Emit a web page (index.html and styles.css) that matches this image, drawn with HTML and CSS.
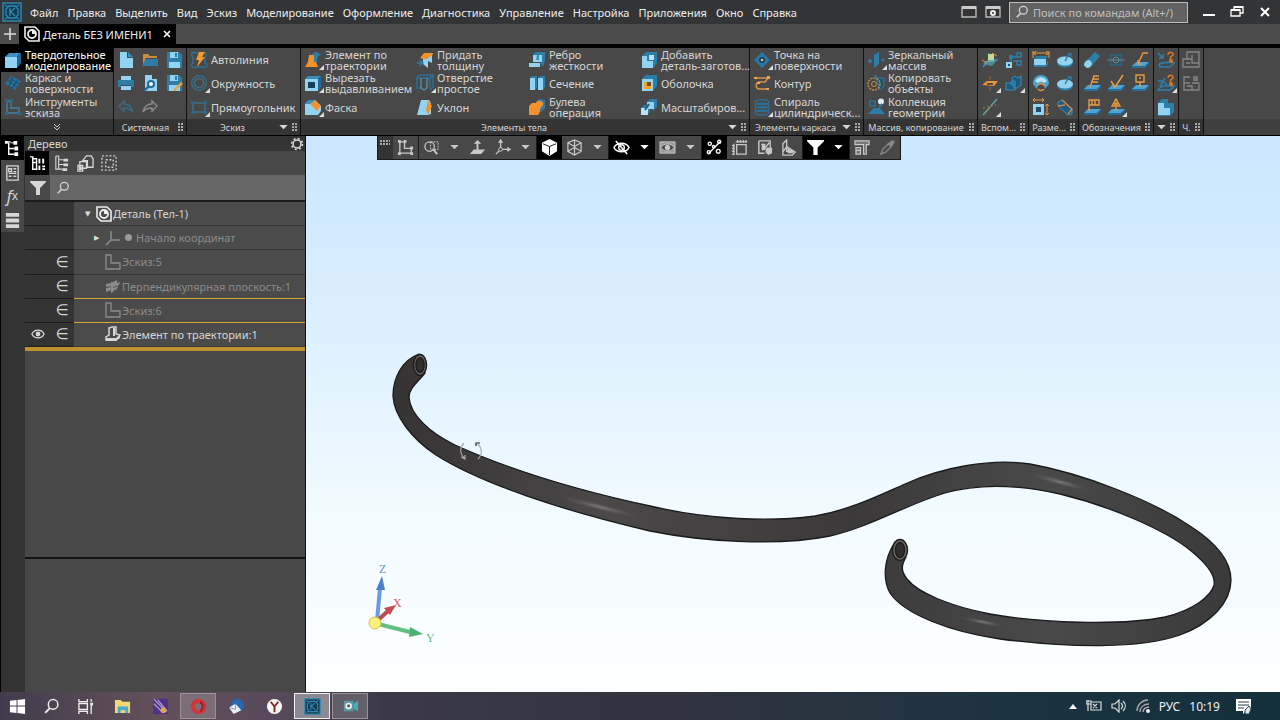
FILE: index.html
```
<!DOCTYPE html>
<html lang="ru">
<head>
    <meta charset="UTF-8">
    <meta name="viewport" content="width=device-width, initial-scale=1">
    <title>Деталь БЕЗ ИМЕНИ1</title>
    <link rel="stylesheet" href="styles.css">
</head>
<body>

<!-- Набор иконок -->
<svg class="sprite" aria-hidden="true">
    <defs>
        <symbol id="logo" viewBox="0 0 20 20"><rect x="1" y="1" width="18" height="18" fill="#123c52" stroke="#3488b3" stroke-width="1.4"/><path d="M7 4h6l3 3v6l-3 3H7l-3-3V7zM8 6v8M8 10l5-4M8 9l5 5M3 3l3 2M17 3l-3 2M3 17l3-2M17 17l-3-2" fill="none" stroke="#3488b3" stroke-width="1.3"/></symbol>
        <symbol id="part" viewBox="0 0 16 16"><path d="M1 1h10l4 4v10H5l-4-4z" fill="none" stroke="#eee" stroke-width="1.6"/><circle cx="8" cy="8" r="4" fill="none" stroke="#eee" stroke-width="1.8"/><path d="M8 8V4.500a3.500 3.500 0 0 1 3.500 3.500z" fill="#eee"/></symbol>
        <symbol id="search" viewBox="0 0 16 16"><circle cx="9.500" cy="6" r="4.500" fill="none" stroke="currentColor" stroke-width="1.4"/><path d="M6.500 9.500L2 14" stroke="currentColor" stroke-width="1.8"/></symbol>
        <symbol id="funnel" viewBox="0 0 16 16"><path d="M0 1h16v1l-6 6v7H6V8L0 2z" fill="currentColor"/></symbol>
        <symbol id="caret" viewBox="0 0 10 6"><path d="M0 0h10L5 5z" fill="currentColor"/></symbol>
        <symbol id="grip" viewBox="0 0 5 8"><path d="M0 0h2v2H0zM3 0h2v2H3zM0 3h2v2H0zM3 3h2v2H3zM0 6h2v2H0zM3 6h2v2H3z" fill="currentColor"/></symbol>

        <symbol id="cube" viewBox="0 0 18 18"><path d="M1 6l4-4h12l-4 4z" fill="#3b8fc0"/><path d="M1 6h12v11H1z" fill="#93d3f2"/><path d="M13 6l4-4v10l-4 5z" fill="#1f6a99"/></symbol>
        <symbol id="frame" viewBox="0 0 18 18"><path d="M1 10l6-8 4 2 6 3-6 9-4-3z" fill="#2a6f9b"/><path d="M4 6l9 7M9 3l-4 9M14 6l-6 8M6 4l9 6" stroke="#18486a"/></symbol>
        <symbol id="sketch" viewBox="0 0 18 18"><path d="M3 3h4v7h8v5H3z" fill="none" stroke="#43809f" stroke-width="1.4"/><path d="M1 1h3v3H1zM6 1h3v3H6zM1 14h3v3H1zM14 14h3v3h-3z" fill="#2c6788"/></symbol>
        <symbol id="new" viewBox="0 0 18 18"><path d="M3 1h7v6h6v10H3z" fill="#93d3f2"/><path d="M11 1l5 5h-5z" fill="#3b8fc0"/></symbol>
        <symbol id="open" viewBox="0 0 18 18"><path d="M2 3h5l2 2h7v2H5l-3 7z" fill="#c98a44"/><path d="M5 8h12v7H1z" fill="#2e7da9"/></symbol>
        <symbol id="save" viewBox="0 0 18 18"><path d="M2 1h12l3 3v13H2z" fill="#2e7da9"/><path d="M5 1h8v6H5zM4 11h11v6H4z" fill="#93d3f2"/><path d="M10 2h2v4h-2z" fill="#2e7da9"/></symbol>
        <symbol id="print" viewBox="0 0 18 18"><path d="M4 2h10v4H4zM4 12h10v4H4z" fill="#93d3f2"/><path d="M1 6h16v7h-3v-2H4v2H1z" fill="#2e7da9"/></symbol>
        <symbol id="preview" viewBox="0 0 18 18"><path d="M4 1h7v4h5v12H4z" fill="#93d3f2"/><circle cx="10" cy="10" r="3" fill="#fff" stroke="#1f6a99" stroke-width="2"/><path d="M7.500 12.500L3 17" stroke="#1f6a99" stroke-width="2.400"/></symbol>
        <symbol id="saveas" viewBox="0 0 18 18"><use href="#save"/><path d="M8 16l8-8 2 2-8 7z" fill="#f0a040"/></symbol>
        <symbol id="undo" viewBox="0 0 18 18"><path d="M7 3L2 8l5 5v-3c4 0 7 1 9 4-1-5-4-8-9-8z" fill="none" stroke="#3c6a83" stroke-width="1.400"/></symbol>
        <symbol id="redo" viewBox="0 0 18 18"><path d="M11 3l5 5-5 5v-3c-4 0-7 1-9 4 1-5 4-8 9-8z" fill="none" stroke="#8a8a8a" stroke-width="1.400"/></symbol>

        <symbol id="autoline" viewBox="0 0 18 18"><path d="M6 2C2 0 0 4 3 6v6c-4 2 0 6 3 4h7c4 2 5-3 2-4V6c3-3 0-6-3-4z" fill="none" stroke="#2e7094" stroke-width="1.500"/><path d="M9 1h6l-3 5h3l-8 10 2-7H6z" fill="#f39a2d"/></symbol>
        <symbol id="circle" viewBox="0 0 18 18"><circle cx="9" cy="9" r="7.200" fill="none" stroke="#2f6f92" stroke-width="1.500"/><circle cx="9" cy="9" r="4.500" fill="none" stroke="#4c6c7d" stroke-width="1.500"/></symbol>
        <symbol id="rect" viewBox="0 0 18 18"><path d="M3 5h12v9H3z" fill="none" stroke="#3a6f8c" stroke-width="1.500"/><path d="M1 3h3v3H1zM14 3h3v3h-3zM1 13h3v3H1zM14 13h3v3h-3z" fill="#2c6788"/></symbol>

        <symbol id="sweep" viewBox="0 0 18 18"><path d="M7 8c0-5 3-7 6-7l4 3c-3 0-4 2-4 7l-4 5z" fill="#2e7da9"/><path d="M5 4h5v7h2l2 5H1l3-5z" fill="#f3912a"/></symbol>
        <symbol id="cut" viewBox="0 0 18 18"><path d="M1 5l3-3h13l-3 3z" fill="#3b8fc0"/><path d="M14 5l3-3v11l-3 4z" fill="#1f6a99"/><path d="M1 5h13v12H1z" fill="#93d3f2"/><path d="M4 8h7v6H4z" fill="#183f59"/></symbol>
        <symbol id="chamfer" viewBox="0 0 18 18"><path d="M1 6l4-4h6l6 6v5l-3 4H1z" fill="#93d3f2"/><path d="M6 6l5-4 6 6-4 5z" fill="#f3912a"/><path d="M1 6l4-4h6L6 6z" fill="#3b8fc0"/></symbol>
        <symbol id="thick" viewBox="0 0 18 18"><path d="M4 7l4-5h9l-2 6H7z" fill="#f3912a"/><path d="M7 8h4l5-4v8l-4-2v7l-5-4z" fill="#93d3f2"/><path d="M1 12h5M3 9l4 3-4 3" fill="none" stroke="#2e7da9" stroke-width="1.400"/></symbol>
        <symbol id="hole" viewBox="0 0 18 18"><path d="M1 3l3-2h13l-3 3v9M1 3v11h4M17 2v11l-3 3M1 4h13" fill="none" stroke="#2e6f96" stroke-width="1.400"/><path d="M5 4v10l3 2 3-2V4" fill="none" stroke="#4f91b4" stroke-width="1.400"/></symbol>
        <symbol id="draft" viewBox="0 0 18 18"><path d="M5 2h8l2 3v11l-3 1H1z" fill="#93d3f2"/><path d="M12 2l4 6-4 9-2-5z" fill="#f3912a"/></symbol>
        <symbol id="rib" viewBox="0 0 18 18"><path d="M5 3l3-2h9v9l-2 6-3-5z" fill="#2e7da9"/><path d="M5 4h9v7H5zM1 12h11v4H1z" fill="#93d3f2"/><path d="M9 4h2v5H8z" fill="#3b8fc0"/></symbol>
        <symbol id="section" viewBox="0 0 18 18"><path d="M2 4l2-2h5v12l-2 2zM10 4l2-2h5v11l-2 3z" fill="#2e7da9"/><path d="M2 4h5v12H2zM10 4h5v12h-5z" fill="#93d3f2"/></symbol>
        <symbol id="boolean" viewBox="0 0 18 18"><path d="M8 4l3-3 6 1v8l-4 4z" fill="#2e7da9"/><path d="M1 8l3-3h4c2-4 8-2 7 2l-3 4v3l-2 3H1z" fill="#f3912a"/></symbol>
        <symbol id="addpart" viewBox="0 0 18 18"><path d="M2 5l4-4h11v11l-4 5z" fill="#2e7da9"/><path d="M2 5h5v5h6v7H2z" fill="#93d3f2"/><path d="M9 4h5v5H9z" fill="#b7e4f8"/></symbol>
        <symbol id="shell" viewBox="0 0 18 18"><path d="M2 5l4-4h11v11l-4 5z" fill="#2e7da9"/><path d="M2 5h11v12H2z" fill="#93d3f2"/><path d="M4 8h7v7H4z" fill="#f3a02d"/><path d="M7 8h4v4H7z" fill="#754916"/></symbol>
        <symbol id="scale" viewBox="0 0 18 18"><path d="M7 4l3-3h7v8l-4 4M1 10l3-3h6v7l-3 3" fill="#2e7da9"/><path d="M7 4h7v7H7z" fill="#93d3f2"/><path d="M1 10h7v7H1z" fill="#b7e4f8"/><path d="M9 6l-4 6" stroke="#235c80" stroke-width="2"/></symbol>

        <symbol id="point" viewBox="0 0 18 18"><path d="M1 9l8-8 8 8-8 8z" fill="#2778a8"/><circle cx="9" cy="9" r="3" fill="#173e57"/><circle cx="9" cy="9" r="1.300" fill="#e8c58b"/></symbol>
        <symbol id="contour" viewBox="0 0 18 18"><path d="M3 4h12l-3 4H7c-5 0-5 7 0 7h7" fill="none" stroke="#d79146" stroke-width="1.600"/><path d="M1 3h3v2H1zM14 2h3v3h-3zM4 8h3v2H4zM13 14h3v2h-3z" fill="#e7a65a"/></symbol>
        <symbol id="spiral" viewBox="0 0 18 18"><g fill="none" stroke="#2b7099" stroke-width="1.400"><ellipse cx="9" cy="4" rx="7" ry="2.400"/><ellipse cx="9" cy="7.500" rx="7" ry="2.400"/><ellipse cx="9" cy="11" rx="7" ry="2.400"/><ellipse cx="9" cy="14.500" rx="7" ry="2.400"/></g></symbol>
        <symbol id="mirror" viewBox="0 0 18 18"><path d="M7 4l5-3v12l-5 4z" fill="#2e7da9"/><circle cx="3" cy="10" r="2" fill="#2e7da9"/><circle cx="16" cy="9" r="1.500" fill="#2e7da9"/></symbol>
        <symbol id="copyobj" viewBox="0 0 18 18"><path d="M8 1l4 3h5v8l-4 4z" fill="#23516b" stroke="#2e7da9"/><circle cx="7" cy="10" r="6" fill="none" stroke="#c98c48" stroke-width="1.400" stroke-dasharray="2 1"/><circle cx="7" cy="10" r="2.500" fill="none" stroke="#c98c48"/></symbol>
        <symbol id="collect" viewBox="0 0 18 18"><path d="M1 16l6-6h6l5 6z" fill="#2e7da9"/><path d="M3 3h5v5H3z" fill="none" stroke="#2e6f96" stroke-width="1.500"/><circle cx="14" cy="3.500" r="3" fill="#dcecf3"/><path d="M12 9l3-3" stroke="#2e7da9" stroke-width="2"/></symbol>

        <symbol id="csys" viewBox="0 0 18 18"><path d="M2 16l6-7V2M8 9h9" fill="none" stroke="#3b8fc0" stroke-width="1.500"/><path d="M7 3h6v8H7z" fill="#c0d99c"/><path d="M2 13l4-4h10l-5 6z" fill="#4f9cb1" opacity=".8"/><path d="M1 9l5 3M11 2l5 3" stroke="#e79a43"/></symbol>
        <symbol id="plane" viewBox="0 0 18 18"><path d="M1 11l5-4h11l-4 5z" fill="#e7953a"/><path d="M6 10h6" stroke="#5a4a3a" stroke-width="2"/><path d="M9 2v4M9 13v4" stroke="#9b6a3a"/></symbol>
        <symbol id="axis" viewBox="0 0 18 18"><path d="M2 17L16 1" stroke="#5ca4a1" stroke-width="1.500"/><path d="M2 10l7-2 6-1M4 14l9-9" stroke="#b0844f" stroke-dasharray="2 2"/></symbol>
        <symbol id="links" viewBox="0 0 18 18"><path d="M6 6h6M6 6v7M8 10h5M12 2h4v4h-4zM12 10h4v4h-4z" fill="none" stroke="#2e7da9" stroke-width="1.500"/><path d="M4 4h4v4H4z" fill="#2e7da9"/><path d="M1 11h6v6H1z" fill="#93d3f2"/><path d="M3 13h2v2H3z" fill="#23516b"/></symbol>
        <symbol id="parts" viewBox="0 0 18 18"><path d="M7 4l3-2 3 2 3-2v9l-4 3H9zM1 9h9v7H1z" fill="#1f5878" stroke="#3b8fc0"/><circle cx="8" cy="9" r="3" fill="#2e7da9"/></symbol>
        <symbol id="dimlin" viewBox="0 0 18 18"><path d="M2 8h12v6H2z" fill="#93d3f2"/><path d="M2 14h12l2-6v6l-2 2H2zM2 8l2-3h12l-2 3z" fill="#2e7da9"/><path d="M2 2h14M4 0L1 2l3 2M14 0l3 2-3 2M1 0v7M17 0v7" fill="none" stroke="#e79a43"/></symbol>
        <symbol id="dimrad" viewBox="0 0 18 18"><path d="M1 10c0-12 16-12 16 0l-4 5C12 7 6 7 5 15z" fill="#4aa4d4"/><path d="M3 7c4-5 8-5 12 0l-3 2c-2-2-4-2-6 0z" fill="#b7e4f8"/><path d="M5 12c2-3 6-3 8 0M6 15c2 2 4 2 6 0" fill="none" stroke="#e79a43" stroke-width="1.300"/></symbol>
        <symbol id="dimsq" viewBox="0 0 18 18"><path d="M1 6h11v11H1z" fill="#93d3f2"/><path d="M4 9h5v5H4z" fill="#204c65"/><path d="M1 2h11M3 0L1 2l2 2M10 0l2 2-2 2M15 6v11M13 8l2-2 2 2M13 15l2 2 2-2" fill="none" stroke="#e79a43"/></symbol>
        <symbol id="disc" viewBox="0 0 18 18"><ellipse cx="9" cy="12" rx="8" ry="4.500" fill="#2e7da9"/><ellipse cx="9" cy="10" rx="8" ry="4.500" fill="#93d3f2"/><path d="M9 10l4-7M12 3h3v3" fill="none" stroke="#2e7da9" stroke-width="1.500"/></symbol>
        <symbol id="slant" viewBox="0 0 18 18"><path d="M2 4l4-2 10 9v5l-4 1L2 8z" fill="#205a7c" stroke="#3b8fc0"/><path d="M6 2l10 9-4 5M2 8l7-1" fill="none" stroke="#c98c48" stroke-width="1.400"/></symbol>
        <symbol id="cyl" viewBox="0 0 18 18"><path d="M2 11L12 1l5 4-9 11z" fill="#2e7da9"/><ellipse cx="5" cy="13" rx="3.500" ry="4" fill="#93d3f2" transform="rotate(45 5 13)"/></symbol>
        <symbol id="ctr" viewBox="0 0 18 18"><path d="M4 4h10v10H4z" fill="none" stroke="#2b6587" stroke-width="1.500"/><path d="M0 9h18" stroke="#74888f"/><circle cx="9" cy="9" r="3" fill="none" stroke="#4f91b4"/></symbol>
        <symbol id="slab" viewBox="0 0 18 18"><path d="M1 15l4-4h13l-4 4z" fill="#4aa4d4"/><path d="M1 15h13l4-4v2l-4 4H1z" fill="#256e98"/></symbol>
        <symbol id="lead" viewBox="0 0 18 18"><use href="#slab"/><path d="M7 13l5-11h5M7 9v4h3" fill="none" stroke="#e79a43" stroke-width="1.400"/></symbol>
        <symbol id="mark" viewBox="0 0 18 18"><use href="#slab"/><path d="M7 13l4-11h5M10 5h6M9 8h6" fill="none" stroke="#e79a43" stroke-width="1.400"/></symbol>
        <symbol id="rough" viewBox="0 0 18 18"><use href="#slab"/><path d="M4 7l4 6 8-12" fill="none" stroke="#e79a43" stroke-width="1.600"/></symbol>
        <symbol id="base" viewBox="0 0 18 18"><use href="#slab"/><path d="M5 1h8v7H5zM9 8v5M8 4h2" fill="none" stroke="#e79a43" stroke-width="1.400"/></symbol>
        <symbol id="tol" viewBox="0 0 18 18"><use href="#slab"/><path d="M6 13V2h10v5H6M9 2v5M12 2v5" fill="none" stroke="#e79a43" stroke-width="1.400"/></symbol>
        <symbol id="weld" viewBox="0 0 18 18"><use href="#slab"/><path d="M9 13V9M5 8l4-7 4 7zM9 4v4M7 6h4" fill="none" stroke="#e79a43" stroke-width="1.400"/></symbol>
        <symbol id="ask" viewBox="0 0 18 18"><path d="M1 2l5 5M6 3v4H2M2 14c3-5 9 0 12-4l3 2-4 4H3z" fill="none" stroke="#2e7da9" stroke-width="1.600"/><path d="M11 4c0-4 6-3 5 0l-2.500 2v2M13 9h2v2h-2z" fill="none" stroke="#e07c25" stroke-width="1.500"/></symbol>
        <symbol id="ask2" viewBox="0 0 18 18"><path d="M1 7h5l4 4M8 4l-5 8M1 16l4-4h12l-4 4z" fill="none" stroke="#2e7da9" stroke-width="1.600"/><path d="M11 4c0-4 6-3 5 0l-2.500 2v2M13 9h2v2h-2z" fill="none" stroke="#e07c25" stroke-width="1.500"/></symbol>
        <symbol id="body" viewBox="0 0 18 18"><path d="M1 5l4-4h6v4h6v9l-4 4H1z" fill="#2e7da9"/><path d="M1 5h6v5h6v7H1z" fill="#93d3f2"/></symbol>
        <symbol id="sheet" viewBox="0 0 18 18"><path d="M5 1h12v15H1V8h4zM5 8h5V4M10 8v4h7M4 12h4" fill="none" stroke="#858585" stroke-width="1.300"/></symbol>
        <symbol id="sheet2" viewBox="0 0 18 18"><path d="M8 3H2v6h6M2 9v7h15V9M5 12h5v4M10 9h7" fill="none" stroke="#858585" stroke-width="1.300"/><path d="M11 2h5v5h-5z" fill="#777"/></symbol>

        <symbol id="tree" viewBox="0 0 18 18"><path d="M5 3v12h6M5 9h6M2 2h5" fill="none" stroke="currentColor" stroke-width="1.500"/><path d="M1 1h3v3H1zM10 1h4v4h-4zM11 7h4v4h-4zM11 13h4v4h-4z" fill="currentColor"/><path d="M7 3h4" stroke="currentColor"/></symbol>
        <symbol id="tree2" viewBox="0 0 18 18"><path d="M1 2h3v13h5M4 4h4v11M4 8h4" fill="none" stroke="currentColor" stroke-width="1.500"/><path d="M10 4h2v5h-2zM14 4h2v5h-2zM10 11h2v5h-2zM14 11h3v2h-3zM14 14h3v2h-3z" fill="currentColor"/></symbol>
        <symbol id="tree3" viewBox="0 0 18 18"><path d="M3 1h3v14h4M3 1v14h3M6 5h5M6 10h5" fill="none" stroke="currentColor" stroke-width="1.200"/><path d="M11 4h5v3h-5zM11 9h5v3h-5zM10 14h5v3h-5z" fill="currentColor"/></symbol>
        <symbol id="docs" viewBox="0 0 18 18"><path d="M6 6l4-5h5l2 3v9h-6V6zM3 7h7v7H3zM1 11h5v6H1z" fill="none" stroke="currentColor" stroke-width="1.400"/><path d="M2 12h3v4H2z" fill="currentColor"/></symbol>
        <symbol id="select" viewBox="0 0 18 18"><path d="M1 1h15v15H1zM5 5h8v8H5z" fill="none" stroke="currentColor" stroke-width="1.400" stroke-dasharray="2 2"/></symbol>
        <symbol id="props" viewBox="0 0 18 18"><path d="M3 2h12v15H3zM5 5h3v3H5zM5 13h3M10 5h3M10 8h3M5 10h8M10 13h3" fill="none" stroke="currentColor" stroke-width="1.400"/></symbol>
        <symbol id="bars" viewBox="0 0 18 18"><path d="M2 1h14v4H2zM2 7h14v4H2zM2 13h14v4H2z" fill="currentColor"/></symbol>
        <symbol id="gear" viewBox="0 0 16 16"><circle cx="8" cy="8" r="4.500" fill="none" stroke="currentColor" stroke-width="1.800"/><circle cx="8" cy="8" r="6.200" fill="none" stroke="currentColor" stroke-width="1.800" stroke-dasharray="2.400 2.470"/></symbol>
        <symbol id="eye" viewBox="0 0 16 16"><path d="M1 8c3-6 11-6 14 0-3 6-11 6-14 0z" fill="none" stroke="currentColor" stroke-width="1.500"/><circle cx="8" cy="8" r="2.800" fill="currentColor"/></symbol>
        <symbol id="origin" viewBox="0 0 16 16"><path d="M6 1v9h9M6 10l-5 5" fill="none" stroke="currentColor" stroke-width="1.500"/></symbol>
        <symbol id="ell" viewBox="0 0 16 16"><path d="M1 1h5v8h9v6H1z" fill="none" stroke="currentColor" stroke-width="1.300"/></symbol>
        <symbol id="perp" viewBox="0 0 16 16"><path d="M1 6l5-1v3l-5 1zM1 10l5-1v3l-5 2zM6 4h2v10l-2 1zM8 4l4-2v3l3-1-1 3-6 2zM8 10l5-2-1 3-4 2z" fill="currentColor"/></symbol>
        <symbol id="sweepw" viewBox="0 0 16 16"><path d="M4 2l3-1h4v7l4 1-4 5H1v-3l3-2z" fill="none" stroke="currentColor" stroke-width="1.500"/><path d="M8 2h2v8H8zM11 12l4-3v3l-4 3zM1 12h10v3H1z" fill="currentColor"/></symbol>

        <symbol id="v-sk" viewBox="0 0 18 18"><path d="M3 3h5v7h7v5H3z" fill="none" stroke="currentColor" stroke-width="1.400"/><path d="M1 1h3v3H1zM7 1h3v3H7zM1 14h3v3H1zM14 14h3v3h-3zM14 8h3v3h-3z" fill="currentColor"/></symbol>
        <symbol id="v-zoom" viewBox="0 0 18 18"><circle cx="7" cy="8" r="5" fill="none" stroke="currentColor" stroke-width="1.300"/><path d="M8 3h8v8H8z" fill="none" stroke="currentColor" stroke-dasharray="2 1"/><path d="M11 11l4 5" stroke="currentColor" stroke-width="2"/></symbol>
        <symbol id="v-norm" viewBox="0 0 18 18"><path d="M1 16l4-5h12l-4 5z" fill="currentColor"/><path d="M8 13V5H5l4-4 4 4h-3v8z" fill="currentColor"/></symbol>
        <symbol id="v-axes" viewBox="0 0 18 18"><path d="M7 2v9h10M7 11l-5 5M14 9l3 2-3 2M5 4l2-3 2 3" fill="none" stroke="currentColor" stroke-width="1.400"/><circle cx="7" cy="11" r="2" fill="#484848" stroke="currentColor"/></symbol>
        <symbol id="v-cube" viewBox="0 0 18 18"><path d="M9 0l8 4v9l-8 5-8-5V4z" fill="#fff"/><path d="M2 5l7 3 7-3M9 8v9" fill="none" stroke="#111" stroke-width="1"/></symbol>
        <symbol id="v-wire" viewBox="0 0 18 18"><path d="M9 1l7 3v9l-7 4-7-4V4zM2 4l7 4 7-4M9 8v9M9 1v8l-7 4M9 9l7 4" fill="none" stroke="currentColor" stroke-width="1.300"/></symbol>
        <symbol id="v-hide" viewBox="0 0 18 18"><path d="M1 9c3-6 13-6 16 0-3 6-13 6-16 0zM3 2l12 14" fill="none" stroke="currentColor" stroke-width="1.600"/><circle cx="9" cy="9" r="3" fill="none" stroke="currentColor" stroke-width="1.500"/></symbol>
        <symbol id="v-view" viewBox="0 0 18 18"><path d="M1 3h16v12H1z" fill="#9a9a9a" stroke="currentColor"/><path d="M2 9c3-5 11-5 14 0-3 5-11 5-14 0z" fill="#484848" stroke="currentColor"/><circle cx="9" cy="9" r="2.800" fill="currentColor"/></symbol>
        <symbol id="v-snap" viewBox="0 0 18 18"><path d="M3 15L15 3" stroke="currentColor" stroke-width="1.500"/><g fill="none" stroke="currentColor" stroke-width="1.400"><circle cx="4" cy="5" r="1.700"/><circle cx="8" cy="8" r="1.200"/><circle cx="14" cy="3" r="1.700"/><circle cx="3" cy="14" r="1.700"/><circle cx="13" cy="13" r="2"/></g></symbol>
        <symbol id="v-a" viewBox="0 0 18 18"><path d="M6 6h10v10H6zM5 3h12M7 1v3M10 1v3M13 1v3M16 1v3M3 5v12M1 7h3M1 10h3M1 13h3M1 16h3" fill="none" stroke="currentColor" stroke-width="1.400"/></symbol>
        <symbol id="v-b" viewBox="0 0 18 18"><path d="M3 2h12v7M3 2v13h6M6 5l4 4 4-5" fill="none" stroke="currentColor" stroke-width="1.500"/><path d="M6 5h4v7H6zM11 9h6v6l-4 2-3-3z" fill="currentColor"/></symbol>
        <symbol id="v-c" viewBox="0 0 18 18"><path d="M2 5l4-4v7l9 6-3 3H2zM6 8v5h8M2 14l4-6" fill="none" stroke="currentColor" stroke-width="1.400"/><path d="M7 9l7 6H7z" fill="currentColor"/></symbol>
        <symbol id="v-d" viewBox="0 0 18 18"><path d="M1 2h15v4h-3v10h-3V6H1zM2 9h5v7H2zM2 12h5" fill="#777" stroke="currentColor" stroke-width="1.200"/></symbol>
        <symbol id="v-e" viewBox="0 0 18 18"><path d="M2 16l2-5 6-6 3 3-6 6z" fill="none" stroke="#888" stroke-width="1.400"/><path d="M9 5l5-4 3 2-4 6z" fill="#888"/></symbol>

        <linearGradient id="g-tube" x1="0" x2="1">
            <stop offset="0" stop-color="#353334"/><stop offset=".25" stop-color="#4a4849"/><stop offset=".55" stop-color="#3b393a"/><stop offset=".78" stop-color="#4a4949"/><stop offset="1" stop-color="#3b3a3a"/>
        </linearGradient>
        <radialGradient id="g-shine"><stop offset="0" stop-color="#7d7b7b"/><stop offset="1" stop-color="#4b494a" stop-opacity="0"/></radialGradient>
    </defs>
</svg>

<div class="app">
    <!-- Главное меню -->
    <header class="menubar">
        <svg class="logo"><use href="#logo"/></svg>
        <nav class="menu">
            <button>Файл</button><button>Правка</button><button>Выделить</button><button>Вид</button><button>Эскиз</button><button>Моделирование</button><button>Оформление</button><button>Диагностика</button><button>Управление</button><button>Настройка</button><button>Приложения</button><button>Окно</button><button>Справка</button>
        </nav>
        <div class="window-tools">
            <button aria-label="Раскладка"><svg width="16" height="12" viewBox="0 0 16 12"><path d="M1 1h14v10H1z" fill="none" stroke="#bbb" stroke-width="1.400"/><path d="M1 0h14v3H1z" fill="#ccc"/></svg></button>
            <button aria-label="Параметры"><svg width="16" height="12" viewBox="0 0 16 12"><path d="M1 1h14v10H1z" fill="none" stroke="#bbb" stroke-width="1.400"/><path d="M1 0h14v3H1z" fill="#ccc"/><circle cx="8" cy="7" r="2" fill="none" stroke="#eee" stroke-width="2"/></svg></button>
            <label class="command-search"><svg><use href="#search"/></svg><input type="text" placeholder="Поиск по командам (Alt+/)" aria-label="Поиск по командам"></label>
            <button class="win" aria-label="Свернуть"><svg width="14" height="14" viewBox="0 0 14 14"><path d="M1 9h12v2H1z" fill="#fff"/></svg></button>
            <button class="win" aria-label="Восстановить"><svg width="14" height="14" viewBox="0 0 14 14"><path d="M4 5V2h9v6h-3M1 5h9v6H1z" fill="none" stroke="#fff" stroke-width="1.300"/><path d="M4 1h9v2H4zM1 4h9v2H1z" fill="#fff"/></svg></button>
            <button class="win" aria-label="Закрыть"><svg width="14" height="14" viewBox="0 0 14 14"><path d="M3 3l8 8M11 3l-8 8" stroke="#fff" stroke-width="2"/></svg></button>
        </div>
    </header>

    <!-- Вкладки документов -->
    <div class="tabs">
        <button class="tab-add" aria-label="Создать"><svg width="12" height="12" viewBox="0 0 12 12"><path d="M6 0v12M0 6h12" stroke="#ddd" stroke-width="1.600"/></svg></button>
        <div class="tab">
            <svg class="i16"><use href="#part"/></svg>
            <span>Деталь БЕЗ ИМЕНИ1</span>
            <button aria-label="Закрыть вкладку"><svg width="8" height="8" viewBox="0 0 8 8"><path d="M1 1l6 6M7 1L1 7" stroke="#fff" stroke-width="1.600"/></svg></button>
        </div>
    </div>

    <!-- Инструментальная панель -->
    <div class="ribbon">
        <section class="group">
            <div class="tools modes">
                <button class="tool active"><svg><use href="#cube"/></svg><span>Твердотельное<br>моделирование</span></button>
                <button class="tool"><svg><use href="#frame"/></svg><span>Каркас и<br>поверхности</span></button>
                <button class="tool"><svg><use href="#sketch"/></svg><span>Инструменты<br>эскиза</span></button>
            </div>
            <footer><span><svg width="8" height="7" viewBox="0 0 8 7"><path d="M1 0l3 3 3-3M1 3l3 3 3-3" fill="none" stroke="#ccc"/></svg></span></footer>
        </section>
        <section class="group">
            <div class="tools">
                <button class="tool" aria-label="Создать"><svg><use href="#new"/></svg></button>
                <button class="tool" aria-label="Печать"><svg><use href="#print"/></svg></button>
                <button class="tool" aria-label="Отменить"><svg><use href="#undo"/></svg></button>
                <button class="tool" aria-label="Открыть"><svg><use href="#open"/></svg></button>
                <button class="tool" aria-label="Просмотр"><svg><use href="#preview"/></svg></button>
                <button class="tool" aria-label="Повторить"><svg><use href="#redo"/></svg></button>
                <button class="tool" aria-label="Сохранить"><svg><use href="#save"/></svg></button>
                <button class="tool" aria-label="Сохранить как"><svg><use href="#saveas"/></svg></button>
            </div>
            <footer><span>Системная</span><svg class="grip"><use href="#grip"/></svg></footer>
        </section>
        <section class="group">
            <div class="tools wide">
                <button class="tool"><svg><use href="#autoline"/></svg><span>Автолиния</span></button>
                <button class="tool more"><svg><use href="#circle"/></svg><span>Окружность</span></button>
                <button class="tool more"><svg><use href="#rect"/></svg><span>Прямоугольник</span></button>
            </div>
            <footer><span>Эскиз</span><svg class="caret"><use href="#caret"/></svg><svg class="grip"><use href="#grip"/></svg></footer>
        </section>
        <section class="group">
            <div class="tools solid">
                <button class="tool more"><svg><use href="#sweep"/></svg><span>Элемент по<br>траектории</span></button>
                <button class="tool more"><svg><use href="#cut"/></svg><span>Вырезать<br>выдавливанием</span></button>
                <button class="tool more"><svg><use href="#chamfer"/></svg><span>Фаска</span></button>
                <button class="tool"><svg><use href="#thick"/></svg><span>Придать<br>толщину</span></button>
                <button class="tool more"><svg><use href="#hole"/></svg><span>Отверстие<br>простое</span></button>
                <button class="tool"><svg><use href="#draft"/></svg><span>Уклон</span></button>
                <button class="tool"><svg><use href="#rib"/></svg><span>Ребро<br>жесткости</span></button>
                <button class="tool"><svg><use href="#section"/></svg><span>Сечение</span></button>
                <button class="tool"><svg><use href="#boolean"/></svg><span>Булева<br>операция</span></button>
                <button class="tool"><svg><use href="#addpart"/></svg><span>Добавить<br>деталь-заготов...</span></button>
                <button class="tool"><svg><use href="#shell"/></svg><span>Оболочка</span></button>
                <button class="tool"><svg><use href="#scale"/></svg><span>Масштабиров...</span></button>
            </div>
            <footer><span>Элементы тела</span><svg class="caret"><use href="#caret"/></svg><svg class="grip"><use href="#grip"/></svg></footer>
        </section>
        <section class="group">
            <div class="tools wide">
                <button class="tool more"><svg><use href="#point"/></svg><span>Точка на<br>поверхности</span></button>
                <button class="tool"><svg><use href="#contour"/></svg><span>Контур</span></button>
                <button class="tool more"><svg><use href="#spiral"/></svg><span>Спираль<br>цилиндрическ...</span></button>
            </div>
            <footer><span>Элементы каркаса</span><svg class="caret"><use href="#caret"/></svg><svg class="grip"><use href="#grip"/></svg></footer>
        </section>
        <section class="group">
            <div class="tools wide">
                <button class="tool more"><svg><use href="#mirror"/></svg><span>Зеркальный<br>массив</span></button>
                <button class="tool"><svg><use href="#copyobj"/></svg><span>Копировать<br>объекты</span></button>
                <button class="tool"><svg><use href="#collect"/></svg><span>Коллекция<br>геометрии</span></button>
            </div>
            <footer><span>Массив, копирование</span><svg class="grip"><use href="#grip"/></svg></footer>
        </section>
        <section class="group">
            <div class="tools">
                <button class="tool" aria-label="Система координат"><svg><use href="#csys"/></svg></button>
                <button class="tool more" aria-label="Плоскость"><svg><use href="#plane"/></svg></button>
                <button class="tool more" aria-label="Ось"><svg><use href="#axis"/></svg></button>
                <button class="tool" aria-label="Связи"><svg><use href="#links"/></svg></button>
                <button class="tool more" aria-label="Компоненты"><svg><use href="#parts"/></svg></button>
            </div>
            <footer><span>Вспом...</span><svg class="grip"><use href="#grip"/></svg></footer>
        </section>
        <section class="group">
            <div class="tools">
                <button class="tool" aria-label="Линейный размер"><svg><use href="#dimlin"/></svg></button>
                <button class="tool" aria-label="Угловой размер"><svg><use href="#dimrad"/></svg></button>
                <button class="tool" aria-label="Авторазмер"><svg><use href="#dimsq"/></svg></button>
                <button class="tool" aria-label="Диаметр"><svg><use href="#disc"/></svg></button>
                <button class="tool" aria-label="Радиус"><svg><use href="#disc"/></svg></button>
                <button class="tool" aria-label="Наклонный размер"><svg><use href="#slant"/></svg></button>
            </div>
            <footer><span>Разме...</span><svg class="grip"><use href="#grip"/></svg></footer>
        </section>
        <section class="group">
            <div class="tools notation">
                <button class="tool" aria-label="Резьба"><svg><use href="#cyl"/></svg></button>
                <button class="tool" aria-label="Марка"><svg><use href="#mark"/></svg></button>
                <button class="tool" aria-label="Допуск"><svg><use href="#tol"/></svg></button>
                <button class="tool" aria-label="Осевая"><svg><use href="#ctr"/></svg></button>
                <button class="tool" aria-label="Шероховатость"><svg><use href="#rough"/></svg></button>
                <button class="tool more" aria-label="Клеймо"><svg><use href="#weld"/></svg></button>
                <button class="tool" aria-label="Выноска"><svg><use href="#lead"/></svg></button>
                <button class="tool" aria-label="База"><svg><use href="#base"/></svg></button>
            </div>
            <footer><span>Обозначения</span><svg class="grip"><use href="#grip"/></svg></footer>
        </section>
        <section class="group">
            <div class="tools">
                <button class="tool" aria-label="Расстояние"><svg><use href="#ask"/></svg></button>
                <button class="tool more" aria-label="Проверка"><svg><use href="#ask2"/></svg></button>
                <button class="tool" aria-label="МЦХ"><svg><use href="#body"/></svg></button>
            </div>
            <footer><span><svg class="caret"><use href="#caret"/></svg></span><svg class="grip"><use href="#grip"/></svg></footer>
        </section>
        <section class="group">
            <div class="tools">
                <button class="tool" aria-label="Чертеж"><svg><use href="#sheet"/></svg></button>
                <button class="tool" aria-label="Виды"><svg><use href="#sheet2"/></svg></button>
            </div>
            <footer><span>Ч.</span><svg class="grip"><use href="#grip"/></svg></footer>
        </section>
        <div class="ribbon-rest"></div>
    </div>

    <main class="workspace">
        <aside class="rail">
            <button class="active" aria-label="Дерево"><svg><use href="#tree"/></svg></button>
            <button aria-label="Параметры"><svg><use href="#props"/></svg></button>
            <button class="fx" aria-label="Переменные"><i>f</i><sub>x</sub></button>
            <button aria-label="Меню"><svg><use href="#bars"/></svg></button>
        </aside>

        <!-- Дерево построения -->
        <aside class="panel">
            <div class="panel-head"><span>Дерево</span><button aria-label="Настройка"><svg class="i14"><use href="#gear"/></svg></button></div>
            <div class="panel-tools">
                <button class="active" aria-label="Структура"><svg><use href="#tree2"/></svg></button>
                <button aria-label="История"><svg><use href="#tree3"/></svg></button>
                <button aria-label="Отношения"><svg><use href="#docs"/></svg></button>
                <button aria-label="Область"><svg><use href="#select"/></svg></button>
            </div>
            <div class="filter">
                <button aria-label="Фильтр"><svg class="i16"><use href="#funnel"/></svg></button>
                <label><svg class="i14"><use href="#search"/></svg><input type="text" aria-label="Поиск в дереве"></label>
            </div>
            <ul class="tree">
                <li><span class="eye"></span><span class="in"></span><div class="node root"><b>▼</b><svg class="i16"><use href="#part"/></svg>Деталь (Тел-1)</div></li>
                <li class="dim"><span class="eye"></span><span class="in"></span><div class="node branch"><b>▶</b><svg class="i16"><use href="#origin"/></svg><i class="dot"></i>Начало координат</div></li>
                <li class="dim"><span class="eye"></span><span class="in">∈</span><div class="node"><svg class="i16"><use href="#ell"/></svg>Эскиз:5</div></li>
                <li class="dim gold"><span class="eye"></span><span class="in">∈</span><div class="node"><svg class="i16"><use href="#perp"/></svg>Перпендикулярная плоскость:1</div></li>
                <li class="dim gold"><span class="eye"></span><span class="in">∈</span><div class="node"><svg class="i16"><use href="#ell"/></svg>Эскиз:6</div></li>
                <li><span class="eye"><svg class="i14"><use href="#eye"/></svg></span><span class="in">∈</span><div class="node"><svg class="i16"><use href="#sweepw"/></svg>Элемент по траектории:1</div></li>
            </ul>
            <div class="rollback"></div>
            <div class="panel-space"></div>
            <div class="panel-bottom"></div>
        </aside>

        <section class="viewport">
            <!-- Трубка и система координат -->
            <svg class="scene" viewBox="306 136 974 556" preserveAspectRatio="xMinYMin meet">
                <path fill="url(#g-tube)" stroke="#1b1a1b" stroke-width="1.300" d="M419 354C402 360 393 378 393 396C394 416 412 439 436 455C480 483 560 510 650 531C700 541 775 547 830 536C870 527 905 505 945 493C980 483 1020 485 1060 494C1110 506 1165 530 1190 550C1206 563 1216 575 1214 585C1211 596 1194 610 1165 617C1120 626 1040 623 990 614C950 606 918 593 907 579C901 571 901 566 906 557L895 542C883 560 883 580 890 593C904 614 950 632 1000 639C1070 648 1140 649 1180 635C1210 624 1231 603 1231 580C1231 558 1212 540 1190 526C1150 499 1080 473 1030 464C990 458 940 468 905 484C880 495 850 510 815 516C770 522 710 520 650 506C580 491 510 470 455 445C430 433 410 415 409 397C409 388 418 382 425 373Z"/>
                <ellipse cx="600" cy="507" rx="45" ry="4" fill="url(#g-shine)" transform="rotate(14 600 507)"/>
                <ellipse cx="1060" cy="482" rx="32" ry="4" fill="url(#g-shine)" transform="rotate(15 1060 482)"/>
                <ellipse cx="983" cy="622" rx="24" ry="3" fill="url(#g-shine)" transform="rotate(11 983 622)"/>
                <g fill="#6b6764" stroke="#201f20" stroke-width="1.500">
                    <ellipse cx="420" cy="365" rx="6.500" ry="10.500"/><ellipse cx="420" cy="365" rx="4" ry="7.500" fill="#302e2f"/>
                    <ellipse cx="900" cy="550" rx="7.500" ry="10.500"/><ellipse cx="900" cy="550" rx="4.500" ry="7.500" fill="#302e2f"/>
                </g>
                <g fill="none" stroke-width="1.200"><path d="M464 443c-5 5-4 11 1 16M461 457l4 2v-4" stroke="#aaa"/><path d="M478 459c5-5 4-11 0-15" stroke="#aaa"/><path d="M476 446v-3h4" stroke="#222"/></g>
                <path d="M377 621l3-33" stroke="#6a9be0" stroke-width="4"/><path d="M376 590l6-14 3 14z" fill="#4d80c8"/>
                <path d="M377 621l11-10" stroke="#b94b50" stroke-width="4"/><path d="M384 608l12-3-6 10z" fill="#c94b50"/>
                <path d="M378 624l32 8" stroke="#62c07e" stroke-width="4"/><path d="M410 627l13 7-14 3z" fill="#4cb070"/>
                <circle cx="375" cy="623" r="6" fill="#fbf17a" stroke="#d3bd45"/>
                <g class="axis-label"><text x="379" y="573" fill="#7295bd">Z</text><text x="393" y="607" fill="#d45a68">X</text><text x="426" y="642" fill="#6dba88">Y</text></g>
            </svg>

            <div class="viewbar">
                <span class="handle"><svg width="10" height="5" viewBox="0 0 10 5"><path d="M0 1h10M0 4h10" stroke="#aaa" stroke-width="2" stroke-dasharray="2 1"/></svg></span>
                <button aria-label="Эскиз"><svg><use href="#v-sk"/></svg></button>
                <button class="sep" aria-label="Масштаб"><svg><use href="#v-zoom"/></svg></button><button class="drop" aria-label="Список"><svg class="caret"><use href="#caret"/></svg></button>
                <button aria-label="Нормально к"><svg><use href="#v-norm"/></svg></button>
                <button aria-label="Ориентация"><svg><use href="#v-axes"/></svg></button><button class="drop" aria-label="Список"><svg class="caret"><use href="#caret"/></svg></button>
                <button class="sep on" aria-label="Полутоновое"><svg><use href="#v-cube"/></svg></button>
                <button aria-label="Каркас"><svg><use href="#v-wire"/></svg></button><button class="drop" aria-label="Список"><svg class="caret"><use href="#caret"/></svg></button>
                <button class="sep on" aria-label="Скрыть"><svg><use href="#v-hide"/></svg></button><button class="drop on" aria-label="Список"><svg class="caret"><use href="#caret"/></svg></button>
                <button aria-label="Вид"><svg><use href="#v-view"/></svg></button><button class="drop" aria-label="Список"><svg class="caret"><use href="#caret"/></svg></button>
                <button class="sep on" aria-label="Привязки"><svg><use href="#v-snap"/></svg></button>
                <button aria-label="Размеры"><svg><use href="#v-a"/></svg></button>
                <button aria-label="Упрощение"><svg><use href="#v-b"/></svg></button>
                <button aria-label="Сечение"><svg><use href="#v-c"/></svg></button>
                <button class="sep on" aria-label="Фильтр"><svg><use href="#funnel"/></svg></button><button class="drop on" aria-label="Список"><svg class="caret"><use href="#caret"/></svg></button>
                <button class="sep" aria-label="Свойства"><svg><use href="#v-d"/></svg></button>
                <button aria-label="Пипетка"><svg><use href="#v-e"/></svg></button>
            </div>
        </section>
    </main>

    <!-- Панель задач -->
    <footer class="taskbar">
        <div class="apps">
            <button aria-label="Пуск"><svg viewBox="0 0 18 18"><path d="M1 3l7-1v6H1zM9 2l8-1v7H9zM1 9h7v7l-7-1zM9 9h8v8l-8-1z" fill="#fff"/></svg></button>
            <button aria-label="Поиск"><svg viewBox="0 0 16 16"><use href="#search"/></svg></button>
            <button aria-label="Представление задач"><svg viewBox="0 0 18 18"><path d="M2 1v3h9V1M2 17v-3h9v3M2 6h9v6H2zM15 1v3M15 8v9" fill="none" stroke="#eee" stroke-width="1.400"/><path d="M14 5h3v3h-3z" fill="#eee"/></svg></button>
            <button class="app-btn" aria-label="Проводник"><svg viewBox="0 0 18 18"><path d="M1 2h6l2 2h8v12H1z" fill="#f5d775"/><path d="M4 9h11v7h-3v-3H7v3H4z" fill="#4aa9ca"/></svg></button>
            <button class="app-btn" aria-label="Редактор"><svg viewBox="0 0 18 18"><path d="M1 1h16v16H1z" fill="#4e3188"/><path d="M2 1l13 14M6 2l10 12M2 6l10 10" stroke="#a99acb" stroke-width="1.400"/><circle cx="12" cy="13" r="3" fill="#e1a644"/></svg></button>
            <button class="app-btn open" aria-label="Opera"><svg viewBox="0 0 18 18"><ellipse cx="9" cy="9" rx="6" ry="6" fill="none" stroke="#cf353b" stroke-width="4.500"/><path d="M11 4c3 3 3 7 0 10" fill="none" stroke="#9d1822" stroke-width="2"/></svg></button>
            <button class="app-btn" aria-label="Почта"><svg viewBox="0 0 18 18"><circle cx="10" cy="8" r="7" fill="#2567b3"/><path d="M1 10l7-4 6 7-8 4z" fill="#e8f1f8"/><path d="M1 10l7 2V6" fill="none" stroke="#7d9dbb"/></svg></button>
            <button class="app-btn" aria-label="Яндекс"><svg viewBox="0 0 18 18"><circle cx="9" cy="9" r="8" fill="#f8f5f3"/><path d="M5 4l4 5 4-5M9 9v6" fill="none" stroke="#7b2a28" stroke-width="2"/></svg></button>
            <button class="app-btn open current" aria-label="КОМПАС-3D"><svg viewBox="0 0 20 20"><use href="#logo"/></svg></button>
            <button class="app-btn open last" aria-label="Запись экрана"><svg viewBox="0 0 18 18"><path d="M2 3h10v11H2z" fill="#5b98a3"/><path d="M12 6l5-3v11l-5-3z" fill="#48aeb4"/><circle cx="7" cy="8.500" r="3.500" fill="#f0f0f0"/><circle cx="7" cy="8.500" r="1.500" fill="#444"/></svg></button>
        </div>
        <div class="tray">
            <svg width="8" height="5" viewBox="0 0 8 5"><path d="M0 5l4-5 4 5z" fill="#fff"/></svg>
            <svg width="16" height="12" viewBox="0 0 16 12"><path d="M5 2h10v8H5zM2 0v5M0 1h5v3H0zM2 5v6M7 4l4 4M11 4L7 8" fill="none" stroke="#ddd" stroke-width="1.200"/></svg>
            <svg width="16" height="14" viewBox="0 0 16 14"><path d="M1 5h3l4-4v12L4 9H1zM10 4c2 2 2 4 0 6M12 2c3 3 3 7 0 10" fill="none" stroke="#ddd" stroke-width="1.200"/></svg>
            <svg width="14" height="14" viewBox="0 0 14 14"><path d="M1 12C1 6 6 1 12 1M4 13c0-5 4-8 9-8M7 13c0-3 3-5 6-5" fill="none" stroke="#aaa" stroke-width="1.300"/><circle cx="12" cy="12" r="2" fill="#eee"/></svg>
            <button>РУС</button>
            <time>10:19</time>
            <button class="notify" aria-label="Уведомления"><svg width="17" height="17" viewBox="0 0 17 17"><path d="M1 1h15v12h-5l-3 3v-3H1z" fill="#fff"/><path d="M3 4h11M3 7h11M3 10h6" stroke="#24404c"/><path d="M10 12l4-4 2 3-2 5h-4z" fill="#dfe8eb" stroke="#24404c"/></svg></button>
        </div>
    </footer>
</div>

</body>
</html>
```
FILE: styles.css
```
* {
    box-sizing: border-box;
}
body {
    margin: 0;
    background: #111;
    color: #d6d6d6;
    font-family: "Noto Sans", "Open Sans", sans-serif;
    font-size: 11px;
}
button {
    border: 0;
    padding: 0;
    background: none;
    color: inherit;
    font: inherit;
    cursor: pointer;
}
input {
    border: 0;
    padding: 0;
    min-width: 0;
    background: none;
    color: inherit;
    font: inherit;
    outline: none;
}
svg {
    display: block;
    flex: none;
}
.sprite {
    position: absolute;
    width: 0;
    height: 0;
}
.i16 {
    width: 16px;
    height: 16px;
}
.i14 {
    width: 14px;
    height: 14px;
}
.caret {
    width: 9px;
    height: 5px;
}
.grip {
    width: 5px;
    height: 8px;
    color: #aaa;
}
.app {
    display: flex;
    flex-direction: column;
    height: 100vh;
    overflow: hidden;
}

/* меню */
.menubar {
    display: flex;
    align-items: center;
    height: 24px;
    background: #333435;
    padding-left: 2px;
}
.logo {
    width: 20px;
    height: 20px;
}
.menu {
    display: flex;
    gap: 9px;
    margin-left: 8px;
    color: #eee;
}
.window-tools {
    display: flex;
    align-items: center;
    gap: 8px;
    margin-left: auto;
    padding-right: 8px;
}
.command-search {
    display: flex;
    align-items: center;
    gap: 4px;
    width: 179px;
    height: 21px;
    padding: 0 5px;
    border: 1px solid #bdbdbd;
    background: #626262;
}
.command-search svg {
    width: 14px;
    height: 14px;
}
.command-search input {
    flex: 1;
}
.command-search input::placeholder {
    color: #c0c0c0;
}
.win {
    margin-left: 6px;
}

/* вкладки */
.tabs {
    display: flex;
    height: 24px;
    background: #4b4b4b;
    border-bottom: 4px solid #000;
    padding-left: 1px;
}
.tab-add {
    display: flex;
    width: 18px;
    align-items: center;
    justify-content: center;
}
.tab {
    display: flex;
    align-items: center;
    gap: 3px;
    padding: 0 5px;
    background: #000;
    color: #eee;
}
.tab button {
    margin-left: 7px;
}

/* лента */
.ribbon {
    display: flex;
    height: 88px;
    padding-left: 1px;
    background: #000;
    border-bottom: 1px solid #000;
}
.group {
    display: flex;
    flex-direction: column;
    border-right: 1px solid #111;
    background: #484848;
}
.tools {
    display: grid;
    grid-auto-flow: column;
    grid-template-rows: repeat(3, 1fr);
    grid-auto-columns: 24px;
    height: 71px;
}
.wide {
    grid-auto-columns: 113px;
}
.modes, .solid {
    grid-auto-columns: 112px;
}
.notation {
    padding: 0 1px;
}
.tool {
    position: relative;
    display: flex;
    align-items: center;
    gap: 3px;
    padding-left: 3px;
    min-width: 0;
    text-align: left;
    line-height: 11px;
    white-space: nowrap;
}
.tool svg {
    width: 18px;
    height: 18px;
}
.tool.active {
    background: #000;
    color: #fff;
}
.more::after {
    content: "";
    position: absolute;
    left: 18px;
    bottom: 2px;
    border-left: 5px solid transparent;
    border-bottom: 5px solid #ddd;
}
.group footer {
    display: flex;
    flex: 1;
    align-items: center;
    gap: 4px;
    padding: 0 3px;
    background: #343434;
    font-size: 9px;
    white-space: nowrap;
}
.group footer > span {
    display: flex;
    flex: 1;
    justify-content: center;
}
.ribbon-rest {
    flex: 1;
    background: linear-gradient(#484848 71px, #404040 71px);
}

/* рабочая область */
.workspace {
    display: flex;
    flex: 1;
    min-height: 0;
}
.rail {
    width: 25px;
    padding-right: 1px;
    background: #333;
    border-left: 1px solid #000;
}
.rail button {
    display: flex;
    align-items: center;
    justify-content: center;
    width: 100%;
    height: 24px;
    background: #484848;
    color: #d5d5d5;
}
.rail svg, .panel-tools svg {
    width: 17px;
    height: 17px;
}
.rail .active, .panel-tools .active {
    background: #000;
    color: #fff;
}
.rail .fx {
    font-size: 16px;
    line-height: 16px;
}
.fx sub {
    font-size: 12px;
}
.panel {
    display: flex;
    flex-direction: column;
    width: 281px;
    background: #484848;
    border-right: 1px solid #111;
}
.panel-head {
    display: flex;
    align-items: center;
    justify-content: space-between;
    height: 15px;
    padding: 0 1px 0 3px;
    background: #343434;
}
.panel-tools {
    display: flex;
    height: 24px;
}
.panel-tools button {
    display: flex;
    align-items: center;
    justify-content: center;
    width: 24px;
}
.filter {
    display: flex;
    height: 27px;
    border-bottom: 2px solid #1c1c1c;
}
.filter button {
    display: flex;
    align-items: center;
    justify-content: center;
    width: 25px;
}
.filter label {
    display: flex;
    flex: 1;
    align-items: center;
    padding-left: 6px;
    background: #666;
}
.tree {
    display: flex;
    flex-direction: column;
    height: 145px;
    margin: 0;
    padding: 0;
    list-style: none;
}
.tree li {
    display: flex;
    flex: 1;
    background: #343434;
}
.tree span {
    display: flex;
    align-items: center;
    justify-content: center;
    width: 25px;
    border-bottom: 1px solid #1c1c1c;
}
.tree .in {
    width: 24px;
    font-family: "DejaVu Sans", sans-serif;
    font-size: 15px;
    line-height: 20px;
}
.node {
    display: flex;
    flex: 1;
    align-items: center;
    gap: 1px;
    padding-left: 31px;
    background: #4b4b4b;
    border-bottom: 1px solid #363636;
    white-space: nowrap;
}
.node b {
    width: 10px;
    font-family: "DejaVu Sans", sans-serif;
    font-size: 7px;
    color: #ddd;
}
.root {
    padding-left: 11px;
}
.branch {
    padding-left: 20px;
}
.dim .node {
    color: #8b8b8b;
}
.gold .node {
    border-bottom-color: #d9a52f;
}
.dot {
    width: 7px;
    height: 7px;
    margin: 0 3px;
    border-radius: 50%;
    background: #999;
}
.rollback {
    height: 4px;
    background: #bd922f;
}
.panel-space {
    height: 206px;
}
.panel-bottom {
    flex: 1;
    border-top: 2px solid #111;
}

/* модель */
.viewport {
    position: relative;
    flex: 1;
    min-width: 0;
    overflow: hidden;
    background: linear-gradient(#cbe6fe, #dcf0fe 35%, #f2fbff 68%, #fdffff);
}
.scene {
    position: absolute;
    top: 0;
    left: 0;
    width: 100%;
}
.axis-label {
    font-family: "Liberation Serif", serif;
    font-size: 12px;
}
.viewbar {
    position: absolute;
    top: 0;
    left: 71px;
    display: flex;
    height: 24px;
    border: 1px solid #1a1a1a;
    border-top: 0;
    background: #484848;
}
.viewbar button {
    display: flex;
    align-items: center;
    justify-content: center;
    width: 25px;
    color: #c8c8c8;
}
.viewbar svg:not(.caret) {
    width: 17px;
    height: 17px;
}
.viewbar .handle svg:not(.caret) {
    width: 10px;
    height: 5px;
}
.handle {
    width: 15px;
    padding: 4px 2px;
    background: #343434;
}
.viewbar .drop {
    width: 21px;
}
.viewbar .sep {
    width: 26px;
    border-left: 1px solid #1a1a1a;
}
.viewbar .on {
    background: #000;
    color: #fff;
}

/* панель задач */
.taskbar {
    display: flex;
    justify-content: space-between;
    height: 28px;
    background: linear-gradient(90deg, #413c4c, #63505a 12%, #56495a 22%, #3b3948 30%, #33343f 50%, #1b3340 80%, #14303c);
    color: #eee;
}
.apps, .tray {
    display: flex;
    align-items: center;
}
.apps button {
    display: flex;
    align-items: center;
    justify-content: center;
    width: 34px;
    height: 26px;
}
.apps svg {
    width: 17px;
    height: 17px;
}
.apps .app-btn {
    width: 36px;
    margin-left: 2px;
}
.apps .open {
    border: 1px solid #9a9098;
    background: #7b6e77;
}
.apps .current {
    border-color: #eee;
    background: #8b8991;
}
.apps .last {
    background: #625f68;
}
.tray {
    gap: 9px;
    padding-right: 28px;
    font-size: 12px;
}
.notify {
    margin-left: 6px;
}
```
